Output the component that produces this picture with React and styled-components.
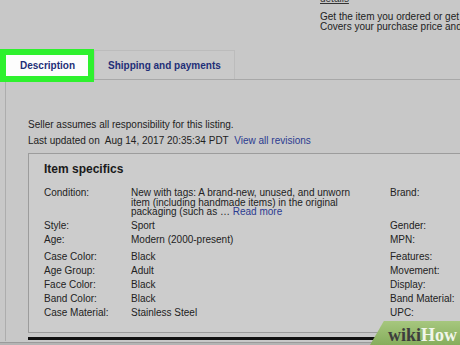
import React from "react";
import styled, { createGlobalStyle } from "styled-components";

const GlobalStyle = createGlobalStyle`
  html, body {
    margin: 0;
    padding: 0;
    background: #c8c8c8;
  }
  body {
    font-family: "Liberation Sans", Arial, sans-serif;
    color: #1e1e1e;
  }
`;

const specs = [
  { label: "Condition:", value: "condition", right: "Brand:" },
  { label: "Style:", value: "Sport", right: "Gender:" },
  { label: "Age:", value: "Modern (2000-present)", right: "MPN:" },
  { label: "Case Color:", value: "Black", right: "Features:", gap: true },
  { label: "Age Group:", value: "Adult", right: "Movement:" },
  { label: "Face Color:", value: "Black", right: "Display:" },
  { label: "Band Color:", value: "Black", right: "Band Material:" },
  { label: "Case Material:", value: "Stainless Steel", right: "UPC:" },
];

function App() {
  return (
    <>
      <GlobalStyle />
      <Page>
        <Guarantee>
          <DetailsLink>details</DetailsLink>
          <GuaranteeLine>Get the item you ordered or get your money back.</GuaranteeLine>
          <GuaranteeLine>Covers your purchase price and original shipping.</GuaranteeLine>
        </Guarantee>

        <TabBar>
          <Tab active>Description</Tab>
          <Tab>Shipping and payments</Tab>
        </TabBar>

        <Panel>
          <Note>Seller assumes all responsibility for this listing.</Note>
          <Note>
            Last updated on&nbsp; Aug 14, 2017 20:35:34 PDT&nbsp; <Link>View all revisions</Link>
          </Note>

          <SpecsBox>
            <SpecsTitle>Item specifics</SpecsTitle>
            <SpecsGrid>
              {specs.map((s) => (
                <React.Fragment key={s.label}>
                  <SpecLabel gap={s.gap}>{s.label}</SpecLabel>
                  {s.value === "condition" ? (
                    <ConditionText>
                      New with tags: A brand-new, unused, and unworn item
                      (including handmade items) in the original packaging
                      (such as … <Link>Read more</Link>
                    </ConditionText>
                  ) : (
                    <SpecValue gap={s.gap}>{s.value}</SpecValue>
                  )}
                  <SpecLabel gap={s.gap}>{s.right}</SpecLabel>
                </React.Fragment>
              ))}
            </SpecsGrid>
          </SpecsBox>

          <NextBoxEdge />
        </Panel>

        <BottomStrip />

        <Logo>
          <LogoWiki>wiki</LogoWiki>
          <LogoHow>How</LogoHow>
        </Logo>
      </Page>
    </>
  );
}

export default App;

const Page = styled.div`
  position: relative;
  width: 460px;
  height: 345px;
  overflow: hidden;
  background: #c8c8c8;
`;

const Guarantee = styled.div`
  display: flex;
  flex-direction: column;
  box-sizing: border-box;
  height: 49px;
  padding-left: 320px;
  font-size: 10px;
  line-height: 10px;
  white-space: nowrap;
  color: #222;
`;

const DetailsLink = styled.div`
  text-decoration: underline;
  color: #333;
  margin: -6px 0 8px;
`;

const GuaranteeLine = styled.div``;

const TabBar = styled.div`
  display: flex;
  align-items: flex-end;
  height: 30px;
  border-bottom: 1px solid #a8a8a8;
`;

const Tab = styled.div`
  box-sizing: border-box;
  display: flex;
  align-items: center;
  font-size: 10px;
  font-weight: bold;
  color: #1f2f78;
  white-space: nowrap;
  ${(p) =>
    p.active
      ? `
    width: 94px;
    height: 33px;
    margin-bottom: -3px;
    padding-left: 14px;
    border: 6px solid #2ef12e;
    background: #fdfdfd;
    position: relative;
    z-index: 1;
  `
      : `
    width: 141px;
    height: 29px;
    padding-left: 13px;
    border: 1px solid #bcbcbc;
    border-bottom: none;
    background: #c9c9c9;
  `}
`;

const Panel = styled.div`
  margin-left: 5px;
  border-left: 1px solid #adadad;
  padding: 37px 0 1px 22px;
`;

const Note = styled.div`
  font-size: 10px;
  line-height: 16px;
  color: #222;
  white-space: nowrap;
`;

const Link = styled.span`
  color: #2b3b90;
`;

const SpecsBox = styled.div`
  width: 480px;
  margin-top: 4px;
  border: 1px solid #9c9c9c;
  border-right: none;
  background: #cccccc;
  padding: 7px 0 12px 15px;
`;

const SpecsTitle = styled.div`
  font-size: 12px;
  font-weight: bold;
  line-height: 16px;
  color: #1a1a1a;
  margin-bottom: 9px;
`;

const SpecsGrid = styled.div`
  display: grid;
  grid-template-columns: 87px 259px 1fr;
  font-size: 10px;
  line-height: 14px;
  color: #222;
  white-space: nowrap;
`;

const SpecLabel = styled.div`
  margin-top: ${(p) => (p.gap ? "3px" : "0")};
`;

const SpecValue = styled.div`
  margin-top: ${(p) => (p.gap ? "3px" : "0")};
`;

const ConditionText = styled.div`
  white-space: normal;
  width: 222px;
  line-height: 9.7px;
  padding: 2px 0 2px;
`;

const NextBoxEdge = styled.div`
  margin-top: 4px;
  height: 3px;
  background: #111;
`;

const BottomStrip = styled.div`
  height: 6px;
  margin-top: 1px;
  background: #b4b4b4;
  border-top: 1px solid #9a9a9a;
`;

const Logo = styled.div`
  position: absolute;
  right: -10px;
  bottom: 0;
  width: 82px;
  height: 24px;
  display: flex;
  align-items: flex-end;
  padding-left: 18px;
  font-family: "Liberation Serif", "Times New Roman", serif;
  font-weight: bold;
  font-size: 18px;
  line-height: 20px;
  &::before {
    content: "";
    position: absolute;
    inset: 0;
    background: linear-gradient(#a6c77e, #86ad5c);
    transform: skewX(-30deg);
    transform-origin: bottom left;
    z-index: 0;
  }
`;

const LogoWiki = styled.span`
  position: relative;
  color: #3d3d3d;
`;

const LogoHow = styled.span`
  position: relative;
  color: #f1f5ea;
`;
